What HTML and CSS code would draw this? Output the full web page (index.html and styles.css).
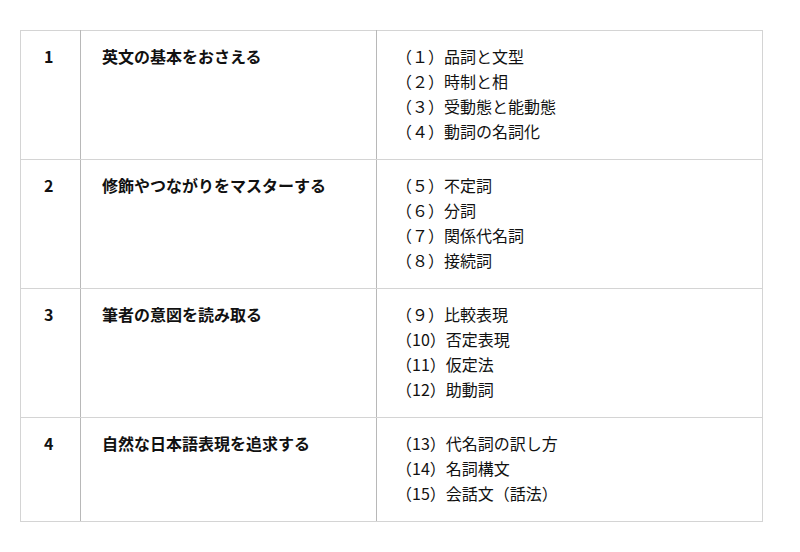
FILE: index.html
```html
<!DOCTYPE html>
<html lang="ja">
<head>
<meta charset="utf-8">
<link rel="stylesheet" href="styles.css">
</head>
<body>
<table class="syllabus">
  <tr>
    <td class="num">1</td>
    <td class="title">英文の基本をおさえる</td>
    <td class="items"><div>（１）品詞と文型</div><div>（２）時制と相</div><div>（３）受動態と能動態</div><div>（４）動詞の名詞化</div></td>
  </tr>
  <tr>
    <td class="num">2</td>
    <td class="title">修飾やつながりをマスターする</td>
    <td class="items"><div>（５）不定詞</div><div>（６）分詞</div><div>（７）関係代名詞</div><div>（８）接続詞</div></td>
  </tr>
  <tr>
    <td class="num">3</td>
    <td class="title">筆者の意図を読み取る</td>
    <td class="items"><div>（９）比較表現</div><div>（10）否定表現</div><div>（11）仮定法</div><div>（12）助動詞</div></td>
  </tr>
  <tr>
    <td class="num">4</td>
    <td class="title">自然な日本語表現を追求する</td>
    <td class="items"><div>（13）代名詞の訳し方</div><div>（14）名詞構文</div><div>（15）会話文（話法）</div></td>
  </tr>
</table>
</body>
</html>
```
FILE: styles.css
```css
html, body {
  margin: 0;
  background: #fff;
}
body {
  padding: 30px 38px 0 20px;
  font-family: "Noto Sans CJK JP", "Noto Sans", sans-serif;
  font-size: 16px;
  color: #111;
}
.syllabus {
  border-collapse: collapse;
  width: 743px;
  table-layout: fixed;
}
.syllabus td {
  vertical-align: top;
  border-top: 1px solid #d4d4d4;
  border-bottom: 1px solid #d4d4d4;
  line-height: 25px;
  padding: 13px 0 15px 0;
}
.syllabus td.num {
  width: 60px;
  border-left: 1px solid #d4d4d4;
  border-right: 1px solid #b8b8b8;
  font-weight: bold;
  padding-left: 23px;
  box-sizing: border-box;
}
.syllabus td.title {
  width: 296px;
  border-right: 1px solid #b8b8b8;
  font-weight: bold;
  padding-left: 21px;
  box-sizing: border-box;
}
.syllabus td.items {
  border-right: 1px solid #d4d4d4;
  padding-left: 19px;
}
```
